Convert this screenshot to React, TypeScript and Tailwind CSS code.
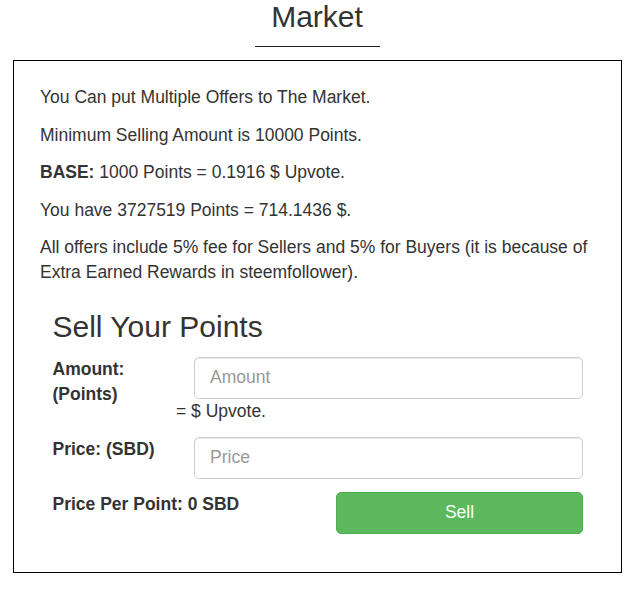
import React from "react";

export default function App() {
  return (
    <div
      className="w-[634px] h-[594px] bg-white text-[#333]"
      style={{ fontFamily: '"Liberation Sans", Arial, sans-serif' }}
    >
      <div className="flex flex-col items-center">
        <h2 className="text-[30px] leading-[33px] font-normal m-0">Market</h2>
        <div className="w-[125px] h-px bg-[#222] mt-[13px]" />
      </div>
      <div className="ml-[13px] mt-[13px] w-[609px] border border-black pl-[26px] pr-[38px] pt-[24px] pb-[38px] text-[17.5px] leading-[25px]">
        <p className="mb-[12.5px]">You Can put Multiple Offers to The Market.</p>
        <p className="mb-[12.5px]">Minimum Selling Amount is 10000 Points.</p>
        <p className="mb-[12.5px]">
          <b>BASE:</b> 1000 Points = 0.1916 $ Upvote.
        </p>
        <p className="mb-[12.5px]">You have 3727519 Points = 714.1436 $.</p>
        <p className="mb-[12.5px] w-[560px]">
          All offers include 5% fee for Sellers and 5% for Buyers (it is because of Extra
          Earned Rewards in steemfollower).
        </p>
        <div className="ml-[12.5px]">
          <h3 className="text-[30px] leading-[33px] font-normal mt-[24.5px] mb-[14px]">
            Sell Your Points
          </h3>
          <div className="flex">
            <div className="w-[123.5px] font-bold">Amount: (Points)</div>
            <div className="flex-1">
              <input
                placeholder="Amount"
                className="ml-[18px] w-[389px] h-[42px] border border-[#ccc] rounded-[5px] px-[15px] text-[17.5px] placeholder:text-[#999] shadow-[inset_0_1px_1px_rgba(0,0,0,0.075)] outline-none"
              />
              <div className="leading-[25px]">= $ Upvote.</div>
            </div>
          </div>
          <div className="flex mt-[13px]">
            <div className="w-[123.5px] font-bold whitespace-nowrap">Price: (SBD)</div>
            <div className="flex-1">
              <input
                placeholder="Price"
                className="ml-[18px] w-[389px] h-[42px] border border-[#ccc] rounded-[5px] px-[15px] text-[17.5px] placeholder:text-[#999] shadow-[inset_0_1px_1px_rgba(0,0,0,0.075)] outline-none"
              />
            </div>
          </div>
          <div className="flex justify-between items-start mt-[13px]">
            <div className="font-bold">Price Per Point: 0 SBD</div>
            <button className="w-[247px] h-[42px] bg-[#5cb85c] border border-[#4cae4c] rounded-[5px] text-white text-[17.5px]">
              Sell
            </button>
          </div>
        </div>
      </div>
    </div>
  );
}
